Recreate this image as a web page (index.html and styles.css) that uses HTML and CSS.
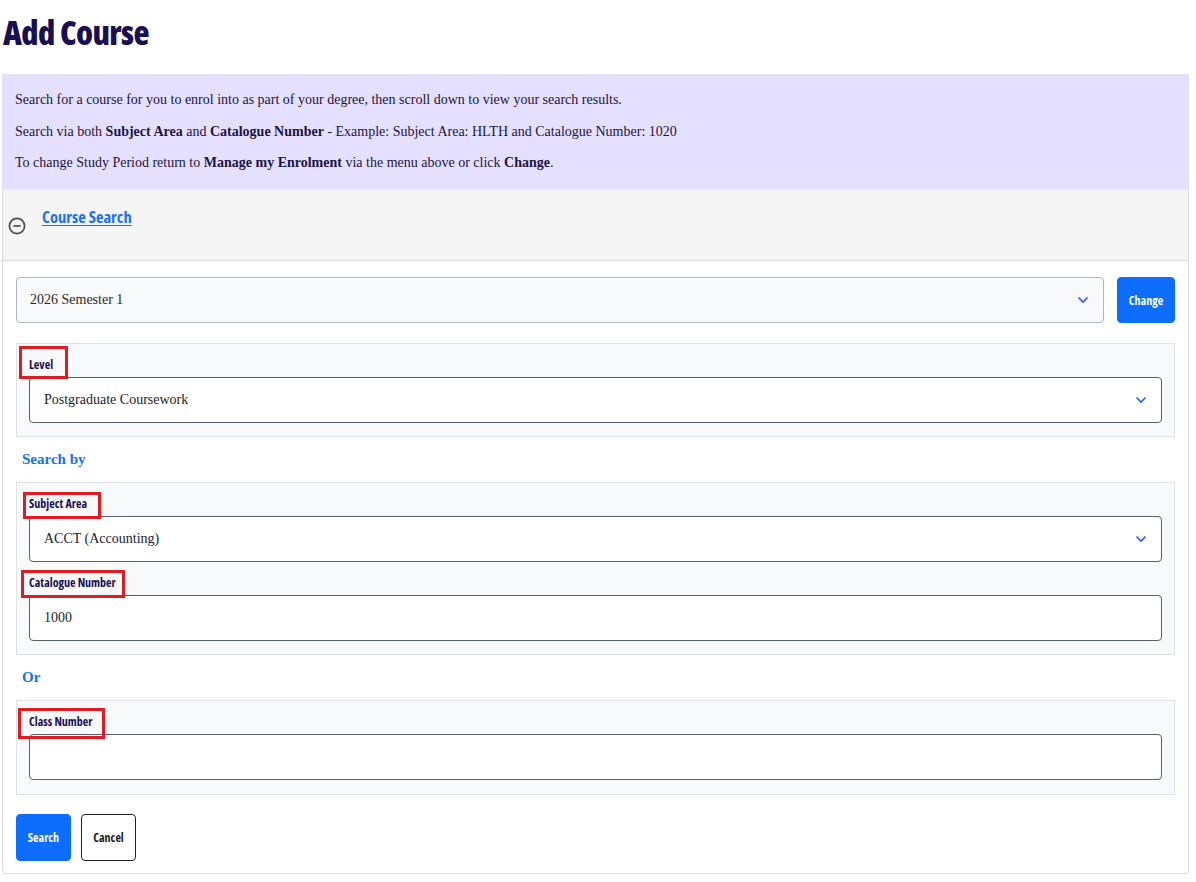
FILE: index.html
```html
<!DOCTYPE html>
<html lang="en">
<head>
<meta charset="utf-8">
<title>Add Course</title>
<link rel="stylesheet" href="styles.css">
</head>
<body>
<main class="page">
  <h1 class="title">Add Course</h1>
  <section class="info">
    <p>Search for a course for you to enrol into as part of your degree, then scroll down to view your search results.</p>
    <p>Search via both <b>Subject Area</b> and <b>Catalogue Number</b> - Example: Subject Area: HLTH and Catalogue Number: 1020</p>
    <p>To change Study Period return to <b>Manage my Enrolment</b> via the menu above or click <b>Change</b>.</p>
  </section>
  <section class="card">
    <header class="card-head">
      <svg class="dash-icon" width="18" height="18" viewBox="0 0 18 18" aria-hidden="true">
        <circle cx="9" cy="9" r="7.6" fill="none" stroke="#4d4d4d" stroke-width="1.7"/>
        <line x1="5.4" y1="9" x2="12.6" y2="9" stroke="#4d4d4d" stroke-width="1.7"/>
      </svg>
      <a class="head-link" href="#">Course Search</a>
    </header>
    <div class="card-body">
      <div class="period-row">
        <div class="select select-muted">
          <span>2026 Semester 1</span>
          <svg class="chev" width="12" height="8" viewBox="0 0 12 8"><polyline points="1.5,1.5 6,6 10.5,1.5" fill="none" stroke="#1f5bff" stroke-width="1.6"/></svg>
        </div>
        <button class="btn btn-primary btn-change" type="button">Change</button>
      </div>

      <div class="panel">
        <label class="field-label"><span class="annot annot-level">Level</span></label>
        <div class="select">
          <span>Postgraduate Coursework</span>
          <svg class="chev" width="12" height="8" viewBox="0 0 12 8"><polyline points="1.5,1.5 6,6 10.5,1.5" fill="none" stroke="#1f5bff" stroke-width="1.6"/></svg>
        </div>
      </div>

      <h2 class="divider-head">Search by</h2>

      <div class="panel">
        <label class="field-label"><span class="annot annot-subject">Subject Area</span></label>
        <div class="select">
          <span>ACCT (Accounting)</span>
          <svg class="chev" width="12" height="8" viewBox="0 0 12 8"><polyline points="1.5,1.5 6,6 10.5,1.5" fill="none" stroke="#1f5bff" stroke-width="1.6"/></svg>
        </div>
        <label class="field-label"><span class="annot annot-cat">Catalogue Number</span></label>
        <div class="input"><span>1000</span></div>
      </div>

      <h2 class="divider-head">Or</h2>

      <div class="panel panel-last">
        <label class="field-label"><span class="annot annot-class">Class Number</span></label>
        <div class="input"></div>
      </div>

      <div class="actions">
        <button class="btn btn-primary btn-small" type="button">Search</button>
        <button class="btn btn-outline btn-small" type="button">Cancel</button>
      </div>
    </div>
  </section>
</main>
</body>
</html>
```

FILE: styles.css
```css
* { box-sizing: border-box; }

html, body {
  margin: 0;
  padding: 0;
  background: #ffffff;
}

body {
  font-family: "Liberation Serif", "DejaVu Serif", serif;
  color: #1b1446;
}

.page {
  padding: 0 7px 0 2px;
}

.title {
  margin: 0;
  padding: 13px 0 0 1px;
  height: 74px;
  font-family: "Open Sans", "DejaVu Sans Condensed", sans-serif;
  font-stretch: 75%;
  font-weight: 800;
  font-size: 33px;
  line-height: 40px;
  color: #1a0f52;
  letter-spacing: -0.6px;
}

.info {
  background: #e5e0ff;
  padding: 16px 13px 16px;
  font-size: 14px;
}

.info p {
  margin: 0;
  line-height: 20px;
}

.info p + p {
  margin-top: 11.5px;
}

.card {
  border: 1px solid #dcdcdc;
  border-top: none;
  border-radius: 0 0 4px 4px;
}

.card-head {
  display: flex;
  align-items: flex-start;
  gap: 16px;
  height: 72px;
  padding: 17px 5px 0;
  background: #f5f5f5;
  border-bottom: 1px solid #dcdcdc;
  border-top: 1px solid #ececec;
}

.dash-icon {
  margin-top: 10px;
  flex: none;
}

.head-link {
  font-family: "Open Sans", "DejaVu Sans Condensed", sans-serif;
  font-stretch: 75%;
  font-weight: 700;
  font-size: 16.5px;
  line-height: 20px;
  color: #1670ff;
  text-decoration: underline;
  text-underline-offset: 2px;
}

.card-body {
  padding: 16px 13px 12px;
}

.period-row {
  display: flex;
  gap: 13px;
  margin-bottom: 20px;
}

.select,
.input {
  display: flex;
  align-items: center;
  justify-content: space-between;
  height: 46px;
  padding: 0 14px;
  background: #ffffff;
  border: 1px solid #5a6068;
  border-radius: 4px;
  font-size: 14px;
  color: #212529;
}

.select-muted {
  flex: 1;
  background: #f8f9fa;
  border-color: #adb5bd;
  padding-left: 13px;
  color: #2a2a2a;
}

.chev {
  flex: none;
  margin-right: 0;
}

.btn {
  font-family: "Open Sans", "DejaVu Sans Condensed", sans-serif;
  font-stretch: 75%;
  font-weight: 700;
  font-size: 12px;
  border-radius: 4px;
  cursor: pointer;
  padding: 0;
}

.btn-primary {
  background: #0d6efd;
  border: 1px solid #0d6efd;
  color: #ffffff;
}

.btn-outline {
  background: #ffffff;
  border: 1px solid #222222;
  color: #1a1a1a;
}

.btn-change {
  width: 58px;
  height: 46px;
  flex: none;
}

.panel {
  background: #f8f9fa;
  border: 1px solid #dee2e6;
  padding: 0 12px 13px;
}

.panel-last {
  padding-bottom: 14px;
}

.field-label {
  display: block;
  height: 33px;
  padding-top: 13px;
  font-family: "Open Sans", "DejaVu Sans Condensed", sans-serif;
  font-stretch: 75%;
  font-weight: 700;
  font-size: 12px;
  line-height: 16px;
  color: #1a0f52;
}

.annot {
  position: relative;
  display: inline-block;
}

.annot::before {
  content: "";
  position: absolute;
  border: 3px solid #e11b22;
  pointer-events: none;
}

.annot-level::before { left: -10px; right: -15px; top: -11px; bottom: -6px; }
.annot-subject::before { left: -6px; right: -14px; top: -4px; bottom: -7px; }
.annot-cat::before { left: -8px; right: -9px; top: -5px; bottom: -7px; }
.annot-class::before { left: -11px; right: -12px; top: -6px; bottom: -9px; }

.divider-head {
  margin: 0;
  height: 45px;
  display: flex;
  align-items: center;
  padding: 0 6px;
  font-family: "Liberation Serif", "DejaVu Serif", serif;
  font-weight: 700;
  font-size: 15px;
  color: #1670ff;
}

.actions {
  display: flex;
  gap: 10px;
  margin-top: 19px;
}

.btn-small {
  width: 55px;
  height: 47px;
}
```
